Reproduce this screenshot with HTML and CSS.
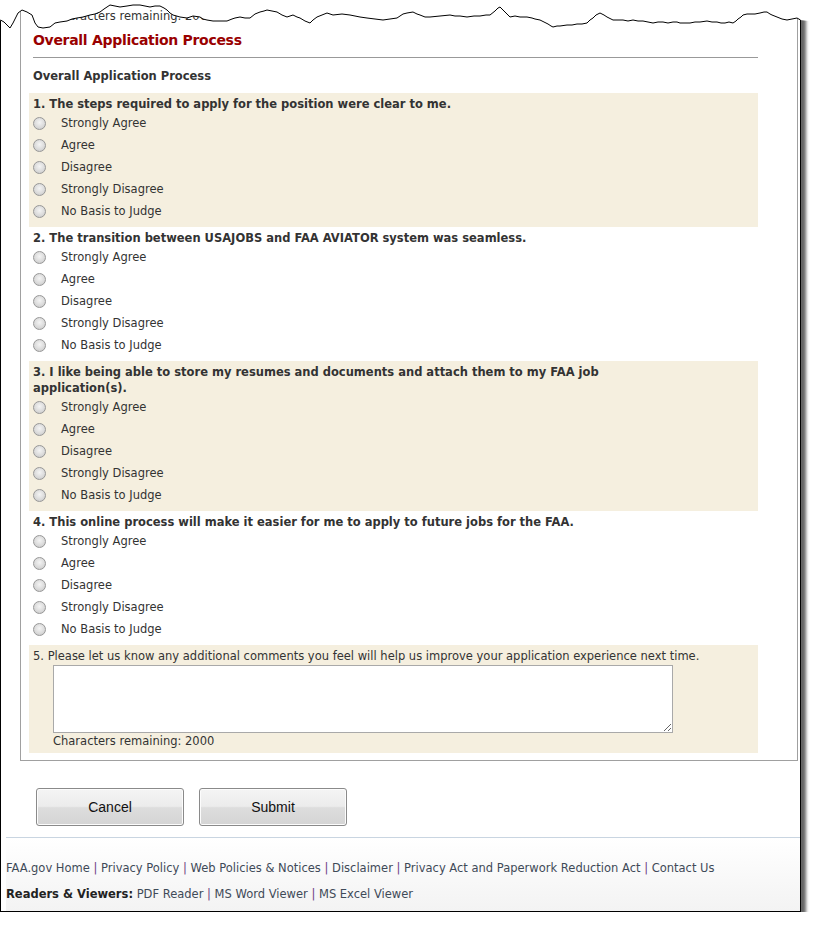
FILE: index.html
```html
<!DOCTYPE html>
<html lang="en">

<head>
    <meta charset="UTF-8">
    <meta name="viewport" content="width=device-width, initial-scale=1.0">
    <title>FAA AVIATOR - Applicant Survey</title>
    <link rel="stylesheet" href="styles.css">
</head>

<body>
    <div class="sheet">
        <div class="page">
            <div class="panel">
                <div class="tail">Characters remaining: 2000</div>

                <h2 class="section-title">Overall Application Process</h2>
                <hr class="section-rule">
                <h3 class="group-title">Overall Application Process</h3>

                <div class="question shaded">
                    <div class="question-text">1. The steps required to apply for the position were clear to me.</div>
                    <label class="choice"><input type="radio" name="q1"><span>Strongly Agree</span></label>
                    <label class="choice"><input type="radio" name="q1"><span>Agree</span></label>
                    <label class="choice"><input type="radio" name="q1"><span>Disagree</span></label>
                    <label class="choice"><input type="radio" name="q1"><span>Strongly Disagree</span></label>
                    <label class="choice"><input type="radio" name="q1"><span>No Basis to Judge</span></label>
                </div>

                <div class="question">
                    <div class="question-text">2. The transition between USAJOBS and FAA AVIATOR system was seamless.</div>
                    <label class="choice"><input type="radio" name="q2"><span>Strongly Agree</span></label>
                    <label class="choice"><input type="radio" name="q2"><span>Agree</span></label>
                    <label class="choice"><input type="radio" name="q2"><span>Disagree</span></label>
                    <label class="choice"><input type="radio" name="q2"><span>Strongly Disagree</span></label>
                    <label class="choice"><input type="radio" name="q2"><span>No Basis to Judge</span></label>
                </div>

                <div class="question shaded">
                    <div class="question-text">3. I like being able to store my resumes and documents and attach them to my FAA job application(s).</div>
                    <label class="choice"><input type="radio" name="q3"><span>Strongly Agree</span></label>
                    <label class="choice"><input type="radio" name="q3"><span>Agree</span></label>
                    <label class="choice"><input type="radio" name="q3"><span>Disagree</span></label>
                    <label class="choice"><input type="radio" name="q3"><span>Strongly Disagree</span></label>
                    <label class="choice"><input type="radio" name="q3"><span>No Basis to Judge</span></label>
                </div>

                <div class="question">
                    <div class="question-text">4. This online process will make it easier for me to apply to future jobs for the FAA.</div>
                    <label class="choice"><input type="radio" name="q4"><span>Strongly Agree</span></label>
                    <label class="choice"><input type="radio" name="q4"><span>Agree</span></label>
                    <label class="choice"><input type="radio" name="q4"><span>Disagree</span></label>
                    <label class="choice"><input type="radio" name="q4"><span>Strongly Disagree</span></label>
                    <label class="choice"><input type="radio" name="q4"><span>No Basis to Judge</span></label>
                </div>

                <div class="question shaded comments">
                    <div class="comment-text">5. Please let us know any additional comments you feel will help us improve your application experience next time.</div>
                    <textarea class="comment-box" name="q5"></textarea>
                    <div class="counter">Characters remaining: 2000</div>
                </div>
            </div>

            <div class="actions">
                <button type="button" class="btn">Cancel</button>
                <button type="button" class="btn">Submit</button>
            </div>

            <div class="footer">
                <div class="footer-row">
                    <a href="#">FAA.gov Home</a> <span class="sep">|</span>
                    <a href="#">Privacy Policy</a> <span class="sep">|</span>
                    <a href="#">Web Policies &amp; Notices</a> <span class="sep">|</span>
                    <a href="#">Disclaimer</a> <span class="sep">|</span>
                    <a href="#">Privacy Act and Paperwork Reduction Act</a> <span class="sep">|</span>
                    <a href="#">Contact Us</a>
                </div>
                <div class="footer-row">
                    <strong>Readers &amp; Viewers:</strong>
                    <a href="#">PDF Reader</a> <span class="sep">|</span>
                    <a href="#">MS Word Viewer</a> <span class="sep">|</span>
                    <a href="#">MS Excel Viewer</a>
                </div>
            </div>
        </div>

        <!-- torn top edge of the clipping -->
        <svg class="tear" width="817" height="34" viewBox="0 0 817 34">
            <path fill="#ffffff" d="M0,0 L0,20 L4,22 L7,25 L10,28 L13,23 L18,13 L22,10 L27,12 L32,15 L35,23 L38,27 L43,28 L50,27 L55,23 L60,22 L67,21 L72,19 L77,18 L83,17 L90,15 L95,14 L100,12 L104,9 L107,7 L110,5 L115,6 L120,7 L127,6 L133,5 L140,5 L145,6 L150,7 L155,6 L160,6 L164,8 L167,10 L170,13 L173,15 L180,17 L187,18 L193,16 L200,17 L203,19 L207,20 L213,21 L220,21 L227,21 L232,19 L235,18 L240,17 L245,18 L250,18 L255,14 L260,12 L264,11 L267,10 L272,11 L277,12 L282,15 L287,17 L293,15 L297,17 L300,18 L305,21 L310,23 L313,20 L317,17 L322,15 L327,13 L333,15 L342,14 L350,15 L355,16 L360,17 L367,18 L375,19 L383,20 L390,19 L397,18 L403,14 L407,13 L413,12 L417,14 L420,15 L425,17 L430,17 L440,16 L450,15 L455,16 L460,16 L467,17 L474,16 L480,16 L486,15 L490,15 L495,11 L498,8 L500,7 L503,10 L505,12 L510,17 L515,16 L520,17 L527,17 L532,18 L535,19 L540,20 L544,22 L548,24 L551,26 L553,27 L557,26 L560,26 L567,25 L572,25 L577,24 L582,24 L587,23 L590,20 L593,18 L596,15 L600,13 L604,15 L607,17 L613,20 L618,20 L623,20 L628,21 L633,20 L638,21 L643,21 L648,22 L653,23 L658,22 L663,22 L668,23 L673,22 L677,22 L680,23 L685,23 L690,23 L695,22 L700,22 L707,21 L712,22 L717,22 L721,23 L725,23 L729,22 L733,23 L736,21 L738,19 L741,17 L743,15 L747,14 L750,14 L755,14 L760,13 L764,12 L767,12 L770,14 L772,15 L777,17 L782,19 L787,20 L792,19 L797,18 L800,20 L817,22 L817,0 Z"/>
            <path fill="none" stroke="#000000" stroke-width="1" d="M0.5,20 L4,22 L7,25 L10,28 L13,23 L18,13 L22,10 L27,12 L32,15 L35,23 L38,27 L43,28 L50,27 L55,23 L60,22 L67,21 L72,19 L77,18 L83,17 L90,15 L95,14 L100,12 L104,9 L107,7 L110,5 L115,6 L120,7 L127,6 L133,5 L140,5 L145,6 L150,7 L155,6 L160,6 L164,8 L167,10 L170,13 L173,15 L180,17 L187,18 L193,16 L200,17 L203,19 L207,20 L213,21 L220,21 L227,21 L232,19 L235,18 L240,17 L245,18 L250,18 L255,14 L260,12 L264,11 L267,10 L272,11 L277,12 L282,15 L287,17 L293,15 L297,17 L300,18 L305,21 L310,23 L313,20 L317,17 L322,15 L327,13 L333,15 L342,14 L350,15 L355,16 L360,17 L367,18 L375,19 L383,20 L390,19 L397,18 L403,14 L407,13 L413,12 L417,14 L420,15 L425,17 L430,17 L440,16 L450,15 L455,16 L460,16 L467,17 L474,16 L480,16 L486,15 L490,15 L495,11 L498,8 L500,7 L503,10 L505,12 L510,17 L515,16 L520,17 L527,17 L532,18 L535,19 L540,20 L544,22 L548,24 L551,26 L553,27 L557,26 L560,26 L567,25 L572,25 L577,24 L582,24 L587,23 L590,20 L593,18 L596,15 L600,13 L604,15 L607,17 L613,20 L618,20 L623,20 L628,21 L633,20 L638,21 L643,21 L648,22 L653,23 L658,22 L663,22 L668,23 L673,22 L677,22 L680,23 L685,23 L690,23 L695,22 L700,22 L707,21 L712,22 L717,22 L721,23 L725,23 L729,22 L733,23 L736,21 L738,19 L741,17 L743,15 L747,14 L750,14 L755,14 L760,13 L764,12 L767,12 L770,14 L772,15 L777,17 L782,19 L787,20 L792,19 L797,18 L800.5,20"/>
        </svg>
    </div>
</body>

</html>
```

FILE: styles.css
```css
body {
    margin: 0;
    background-color: #ffffff;
    font-family: "DejaVu Sans", Verdana, sans-serif;
    font-size: 11.5px;
    color: #333333;
}

.sheet {
    position: relative;
    width: 817px;
}

.page {
    width: 799px;
    border: 1px solid #000000;
    border-top: none;
    background-color: #ffffff;
    box-shadow: 5px 6px 3px rgba(0, 0, 0, 0.6);
}

.tear {
    position: absolute;
    top: 0;
    left: 0;
}

.panel {
    margin: 0 2px 0 19px;
    border: 1px solid #a0a0a0;
    border-top: none;
    padding: 0 0 7px 0;
}

.tail {
    padding: 8px 0 0 32px;
    line-height: 16px;
}

.section-title {
    margin: 6px 0 0 12px;
    font-size: 14px;
    letter-spacing: -0.3px;
    line-height: 20px;
    color: #990000;
}

.section-rule {
    margin: 7px 39px 0 12px;
    border: none;
    border-top: 1px solid #999999;
    height: 0;
}

.group-title {
    margin: 10px 0 0 12px;
    font-size: 11.5px;
    line-height: 16px;
}

.question {
    margin-left: 8px;
    width: 721px;
    padding: 3px 4px 5px 4px;
}

.group-title + .question {
    margin-top: 9px;
}

.shaded {
    background-color: #f5efdf;
}

.question-text {
    width: 620px;
    font-weight: bold;
    line-height: 16px;
}

.choice {
    display: flex;
    align-items: center;
    height: 22px;
}

.choice input {
    -webkit-appearance: none;
    appearance: none;
    width: 13px;
    height: 13px;
    margin: 0 15px 0 0;
    border: 1px solid #979797;
    border-radius: 50%;
    background: radial-gradient(circle at 50% 40%, #f4f4f4 0%, #dedede 50%, #c4c4c4 100%);
    flex-shrink: 0;
}

.comments {
    padding-bottom: 4px;
}

.comment-text {
    line-height: 16px;
}

.comment-box {
    display: block;
    box-sizing: border-box;
    width: 620px;
    height: 68px;
    margin: 1px 0 0 20px;
    border: 1px solid #a9a9a9;
    resize: both;
}

.counter {
    padding-left: 20px;
    line-height: 16px;
}

.actions {
    display: flex;
    gap: 15px;
    margin: 27px 0 0 35px;
}

.btn {
    width: 148px;
    height: 38px;
    border: 1px solid #8a8a8a;
    border-radius: 3px;
    background: linear-gradient(#f4f4f4 0%, #ececec 48%, #dddddd 52%, #d4d4d4 100%);
    box-shadow: inset 0 0 0 1px #fcfcfc;
    font-family: "Liberation Sans", Arial, sans-serif;
    font-size: 14px;
    color: #111111;
    cursor: pointer;
}

.footer {
    margin: 11px 0 0 5px;
    border-top: 1px solid #c9d5e1;
    padding: 22px 0 9px 0;
    background: linear-gradient(#ffffff, #f3f3f3);
}

.footer-row {
    line-height: 16px;
    color: #333333;
}

.footer-row + .footer-row {
    margin-top: 10px;
}

.footer a {
    color: #3f4a58;
    text-decoration: none;
}

.footer .sep {
    color: #6e3d82;
}

.footer strong {
    color: #222222;
}
```
